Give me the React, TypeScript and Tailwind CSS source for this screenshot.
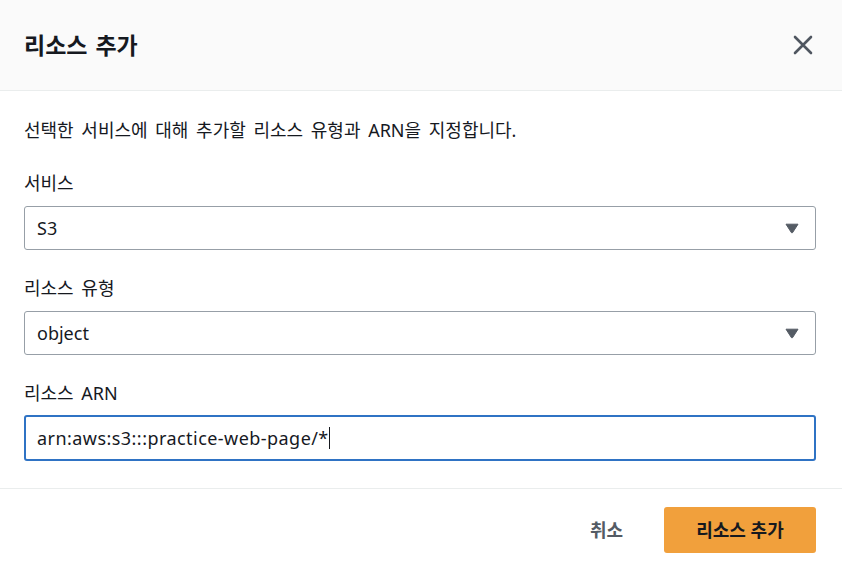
const font = "font-['Noto_Sans','Noto_Sans_CJK_KR',sans-serif]";

const Caret = () => (
  <svg width="14" height="11" viewBox="0 0 14 11" className="shrink-0">
    <path d="M1 1.2 L13 1.2 L7.6 9.6 Q7 10.4 6.4 9.6 Z" fill="#545b64" stroke="#545b64" strokeWidth="1" strokeLinejoin="round" />
  </svg>
);

const Select = ({ value }: { value: string }) => (
  <div className="mt-[11px] h-[44px] flex items-center justify-between rounded-[3px] border border-[#979fa7] bg-white pl-[12px] pr-[16px]">
    <span className="text-[18px] text-[#16191f]">{value}</span>
    <Caret />
  </div>
);

export default function App() {
  return (
    <div className={`w-[842px] h-[568px] bg-white overflow-hidden flex flex-col ${font}`}>
      <div className="h-[91px] shrink-0 flex items-center justify-between bg-[#fafafa] border-b border-[#eaeded] pl-[24px] pr-[29px]">
        <h1 className="text-[23px] font-bold text-[#16191f] leading-none [word-spacing:2px]">리소스 추가</h1>
        <svg width="20" height="20" viewBox="0 0 20 20">
          <path d="M2 2 L18 18 M18 2 L2 18" stroke="#4f5660" strokeWidth="2.6" strokeLinecap="round" />
        </svg>
      </div>

      <div className="pl-[24px] pr-[26px] pt-[27px] pb-[27px] border-b border-[#eaeded] text-[#16191f] [word-spacing:3px]">
        <p className="text-[18px] leading-[24px]">선택한 서비스에 대해 추가할 리소스 유형과 ARN을 지정합니다.</p>

        <div className="mt-[29px] text-[18px] leading-[24px]">서비스</div>
        <Select value="S3" />

        <div className="mt-[26px] text-[18px] leading-[24px]">리소스 유형</div>
        <Select value="object" />

        <div className="mt-[26px] text-[18px] leading-[24px]">리소스 ARN</div>
        <div className="mt-[10px] h-[46px] flex items-center rounded-[3px] border-2 border-[#2f73c4] bg-white pl-[11px]">
          <span className="text-[18px] text-[#16191f] tracking-[0.45px]">arn:aws:s3:::practice-web-page/*</span>
          <span className="w-[1px] h-[22px] bg-[#16191f]" />
        </div>
      </div>

      <div className="flex items-center justify-end pr-[26px] pt-[18px] [word-spacing:3px]">
        <button className="px-[20px] h-[46px] text-[18px] font-bold text-[#545b64] mr-[21px]">취소</button>
        <button className="w-[152px] h-[46px] rounded-[3px] bg-[#f1a03c] text-[18px] font-bold text-[#16191f]">리소스 추가</button>
      </div>
    </div>
  );
}
